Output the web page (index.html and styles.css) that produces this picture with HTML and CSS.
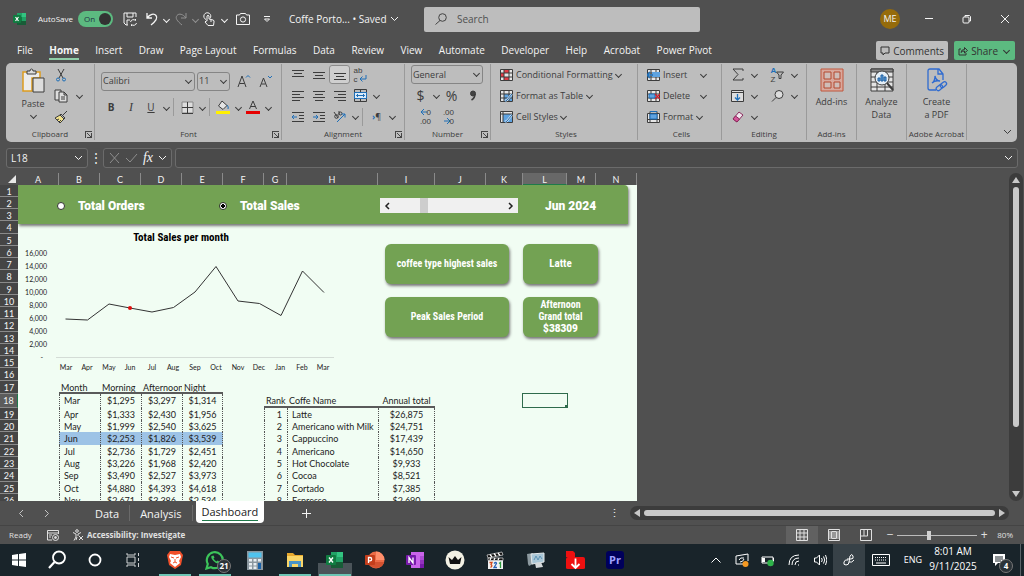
FILE: index.html
```html
<!DOCTYPE html>
<html lang="en">
<head>
	<meta charset="UTF-8">
	<title>Coffe Portofolio - Excel</title>
	<link rel="stylesheet" href="styles.css">
</head>
<body>
	<header class="titlebar">
		<svg class="app" width="14" height="14" viewBox="0 0 14 14"><path fill="#21a366" d="M4 1h9v12H4z"/><path fill="#33c481" d="M9 1h4v4H9z"/><path fill="#107c41" d="M4 5h5v4H4z"/><path fill="#185c37" d="M4 9h9v4H4z"/><rect y="3" width="8" height="8" rx="1" fill="#107c41"/><path d="M2.500 5l3 4M5.500 5l-3 4" stroke="#fff" stroke-width="1.200"/></svg>
		<label class="autosave">AutoSave <input type="checkbox" checked><span class="switch">On</span></label>
		<div class="quick">
			<button aria-label="Save"><svg width="14" height="14" viewBox="0 0 14 14"><path d="M13 5V1H1v10l2 2h2M4 1v4h6V1M4 13V8h3"/><path d="M7.500 10a3 3 0 0 1 5-1.500V7M13.500 11a3 3 0 0 1-5 1.500V14"/></svg></button>
			<button aria-label="Undo"><svg width="14" height="14" viewBox="0 0 14 14"><path d="M2 1v5h5M2 6c3-4 7-5 9-2.500S11 9 6 13" stroke-width="1.300"/></svg></button>
			<button class="dd" aria-label="Undo list"></button>
			<button class="off" aria-label="Redo"><svg width="14" height="14" viewBox="0 0 14 14"><path d="M12 1v5H7M12 6C9 2 5 1 3 3.500S3 9 8 13"/></svg></button>
			<button class="dd off" aria-label="Redo list"></button>
			<button aria-label="Touch mode"><svg width="14" height="14" viewBox="0 0 14 14"><path d="M3 7.500a3.500 3.500 0 1 1 4-1"/><path d="M4 9V4q1-1.500 2 0v3l4 1q1.500.5 1 2l-.5 3.500H5L2 10l1-1zM8 8v2"/></svg></button>
			<button class="dd" aria-label="Touch list"></button>
			<button class="cam" aria-label="Camera"><svg width="14" height="14" viewBox="0 0 14 14"><path d="M.5 3h3l1-1.500h5l1 1.500h3v9.500H.5z"/><circle cx="7" cy="7.500" r="2.600"/></svg></button>
			<button aria-label="Customize"><svg width="8" height="8" viewBox="0 0 8 8"><path d="M1 1.500h6M1.500 4L4 6.500 6.500 4z"/></svg></button>
		</div>
		<button class="doc">Coffe Porto... • Saved <svg width="9" height="6" viewBox="0 0 9 6"><path d="M1 1l3.500 3.500L8 1"/></svg></button>
		<label class="search">
			<svg width="12" height="12" viewBox="0 0 12 12"><circle cx="7.500" cy="4.500" r="3.800"/><path d="M5 7.500L.5 11.500"/></svg>
			<input type="text" placeholder="Search" aria-label="Search">
		</label>
		<span class="avatar">ME</span>
		<div class="win">
			<button aria-label="Minimize"><svg width="10" height="10" viewBox="0 0 10 10"><path d="M1 4.500h8"/></svg></button>
			<button aria-label="Restore"><svg width="10" height="10" viewBox="0 0 10 10"><rect x="1" y="3" width="6" height="6" rx="1"/><path d="M3 3V1.500h4.500L8.500 2.500V7H7"/></svg></button>
			<button aria-label="Close"><svg width="10" height="10" viewBox="0 0 10 10"><path d="M1 1l8 8M9 1L1 9"/></svg></button>
		</div>
	</header>

	<nav class="menu">
		<div class="links"><a href="#">File</a><a href="#" class="on">Home</a><a href="#">Insert</a><a href="#">Draw</a><a href="#">Page Layout</a><a href="#">Formulas</a><a href="#">Data</a><a href="#">Review</a><a href="#">View</a><a href="#">Automate</a><a href="#">Developer</a><a href="#">Help</a><a href="#">Acrobat</a><a href="#">Power Pivot</a></div>
		<button class="comments"><svg width="10" height="10" viewBox="0 0 10 10"><path d="M1 1h8v6H5L3 9V7H1z"/></svg>Comments</button>
		<button class="share"><svg width="10" height="10" viewBox="0 0 10 10"><path d="M3 3H1v6h7V7M3 6.500Q3 3.500 6.500 3.500V1.500L9.500 4.500 6.500 7V5Q4 5 3 6.500z"/></svg>Share<i class="dd"></i></button>
	</nav>

	<section class="ribbon">
		<div class="group clipboard">
			<div class="body">
				<button class="big"><svg width="24" height="26" viewBox="0 0 24 26"><path d="M6 4H2v19h9V10h8V4h-4" fill="#ececec" stroke="#dd9c1e" stroke-width="1.500"/><path d="M6 6V3h3q0-2 1.500-2T12 3h3v3z" fill="#ddd"/><path d="M12 10h11v14H12z" fill="#ddd"/></svg>Paste<i class="dd"></i></button>
				<div class="stack">
					<div class="row"><button class="ib" aria-label="Cut"><svg width="12" height="14" viewBox="0 0 12 14"><path d="M3 1l5 9M9 1L4 10"/><circle cx="3" cy="11.500" r="1.500" stroke="#1e6fb8"/><circle cx="9" cy="11.500" r="1.500" stroke="#1e6fb8"/></svg></button></div>
					<div class="row"><button class="ib" aria-label="Copy"><svg width="14" height="14" viewBox="0 0 14 14"><path d="M5 11H1V1h6v2" fill="#ddd"/><path d="M5 3h5l3 3v7H5zM10 3v3h3M7 8h4M7 10h4" fill="#ddd"/></svg></button><button class="dd" aria-label="Copy options"></button></div>
					<div class="row"><button class="ib" aria-label="Format painter"><svg width="14" height="14" viewBox="0 0 14 14"><path d="M13 1L9 5M7 4l4 4-1 1-4-4z"/><path d="M6 5L1 8l5 5 4-4z" fill="#f0e08a"/><path d="M3 10l2-1M5 12l2-2"/></svg></button></div>
				</div>
			</div>
			<footer>Clipboard<i class="launch"></i></footer>
		</div>
		<div class="group font">
			<div class="body tall">
				<div class="row"><span class="pick name"><select aria-label="Font"><option>Calibri</option></select></span><span class="pick size"><select aria-label="Font size"><option>11</option></select></span><button class="ib grow" aria-label="Increase font"><svg width="14" height="14" viewBox="0 0 14 14"><path d="M1 13L5 2l4 11M2.500 9.500h5"/><path d="M9 3.500l2-2 2 2" stroke="#1e6fb8"/></svg></button><button class="ib" aria-label="Decrease font"><svg width="14" height="14" viewBox="0 0 14 14"><path d="M1 13l3.500-9L8 13M2.500 10h4"/><path d="M9 2l2 2 2-2" stroke="#1e6fb8"/></svg></button></div>
				<div class="row"><button class="ib b">B</button><button class="ib i">I</button><button class="ib u">U</button><button class="dd" aria-label="Underline list"></button><i class="sep"></i><button class="ib" aria-label="Borders"><svg width="13" height="13" viewBox="0 0 13 13"><path d="M1 1h11v11H1z" fill="#ddd" stroke="#888"/><path d="M6.500 1v11M1 6.500h11M1 12.500h11"/></svg></button><button class="dd" aria-label="Border list"></button><i class="sep"></i><button class="ib" aria-label="Fill"><svg width="14" height="14" viewBox="0 0 14 14"><path d="M6 1l5 4.500-4 4L2.500 6z" fill="#e4e4e4"/><path d="M11 5q2 2 1 4" stroke="#1e6fb8"/><path fill="#fff000" stroke="none" d="M0 11h14v3H0z"/></svg></button><button class="dd" aria-label="Fill list"></button><button class="ib" aria-label="Font color"><svg width="14" height="14" viewBox="0 0 14 14"><path d="M3.500 9L7 1l3.500 8M5 6.500h4"/><path fill="#e60000" stroke="none" d="M0 11h14v3H0z"/></svg></button><button class="dd" aria-label="Font color list"></button></div>
			</div>
			<footer>Font<i class="launch"></i></footer>
		</div>
		<div class="group align">
			<div class="body">
				<div class="row"><button class="ib" aria-label="Top align"><svg width="12" height="12" viewBox="0 0 12 12"><path d="M0 1.500h12M2 4.500h8M0 7.500h12"/></svg></button><button class="ib" aria-label="Middle align"><svg width="12" height="12" viewBox="0 0 12 12"><path d="M0 3.500h12M2 6.500h8M0 9.500h12"/></svg></button><button class="ib on" aria-label="Bottom align"><svg width="12" height="12" viewBox="0 0 12 12"><path d="M0 4.500h12M2 7.500h8M0 10.500h12"/></svg></button><button class="ib wrap" aria-label="Wrap text"><span>ab<br>c</span><svg width="8" height="7" viewBox="0 0 8 7"><path d="M7 0v4H1M3.500 1.500L1 4l2.500 2.500" stroke="#1e6fb8"/></svg></button></div>
				<div class="row"><button class="ib" aria-label="Left"><svg width="12" height="12" viewBox="0 0 12 12"><path d="M0 1.500h12M0 4.500h8M0 7.500h12M0 10.500h8"/></svg></button><button class="ib" aria-label="Center"><svg width="12" height="12" viewBox="0 0 12 12"><path d="M0 1.500h12M2 4.500h8M0 7.500h12M2 10.500h8"/></svg></button><button class="ib" aria-label="Right"><svg width="12" height="12" viewBox="0 0 12 12"><path d="M0 1.500h12M4 4.500h8M0 7.500h12M4 10.500h8"/></svg></button><button class="ib" aria-label="Merge"><svg width="13" height="13" viewBox="0 0 13 13"><path d="M.5.500h12v12H.5zM6.500.5v12"/><path d="M.5 3.500h12v6H.5z" fill="#dcecfa" stroke="#1e6fb8"/><path d="M2.500 6.500h8M4 5L2.500 6.500 4 8M9 5l1.500 1.500L9 8" stroke="#1e6fb8"/></svg></button><button class="dd" aria-label="Merge list"></button></div>
				<div class="row"><button class="ib" aria-label="Decrease indent"><svg width="12" height="12" viewBox="0 0 12 12"><path d="M0 1.500h12M7 4.500h5M7 7.500h5M0 10.500h12"/><path d="M0 6h5M2 4L0 6l2 2" stroke="#1e6fb8"/></svg></button><button class="ib" aria-label="Increase indent"><svg width="12" height="12" viewBox="0 0 12 12"><path d="M0 1.500h12M7 4.500h5M7 7.500h5M0 10.500h12"/><path d="M0 6h5M3 4l2 2-2 2" stroke="#1e6fb8"/></svg></button><button class="ib" aria-label="Orientation"><svg width="14" height="14" viewBox="0 0 14 14"><circle cx="3.500" cy="6.500" r="1.800"/><path d="M1 2l4 6M6 1v4"/><circle cx="7.500" cy="3.500" r="1.500"/><path d="M4 12l8-8M8.500 4H12v3.500" stroke="#1e6fb8"/></svg></button><button class="dd" aria-label="Orientation list"></button><i class="sep"></i><button class="ib para"><b>›</b>¶</button><button class="dd" aria-label="Direction list"></button></div>
			</div>
			<footer>Alignment<i class="launch"></i></footer>
		</div>
		<div class="group number">
			<div class="body">
				<div class="row"><span class="pick fmt"><select aria-label="Number format"><option>General</option></select></span></div>
				<div class="row sym"><button class="ib">$</button><button class="dd" aria-label="Currency list"></button><button class="ib">%</button><button class="ib comma" aria-label="Comma style"><svg width="8" height="12" viewBox="0 0 8 12"><circle cx="4" cy="3.500" r="2.500" fill="#444"/><path d="M6 4q0 4-3.500 6" stroke-width="1.500"/></svg></button></div>
				<div class="row"><button class="ib dec"><svg width="6" height="6" viewBox="0 0 6 6"><path d="M0 3h6M3 0L0 3l3 3" stroke="#1e6fb8"/></svg>0<br>.00</button><button class="ib dec">.00<br><svg width="6" height="6" viewBox="0 0 6 6"><path d="M0 3h6M3 0l3 3-3 3" stroke="#1e6fb8"/></svg>0</button></div>
			</div>
			<footer>Number<i class="launch"></i></footer>
		</div>
		<div class="group styles">
			<div class="body">
				<div class="row"><button class="tb"><svg width="13" height="12" viewBox="0 0 13 12"><path d="M.5.500h12v11H.5z" fill="#e6e6e6"/><path d="M4 1h5v3H4zM1 4h3v4H1zM4 8h5v3H4z" fill="#e03c46" stroke="none"/><path d="M.5 4h12M.5 8h12M4 .5v11M9 .5v11"/></svg>Conditional Formatting<i class="dd"></i></button></div>
				<div class="row"><button class="tb"><svg width="13" height="12" viewBox="0 0 13 12"><path d="M.5.500h12v11H.5z" fill="#e6e6e6"/><path d="M4 4h8v7H4z" fill="#5fa3e0" stroke="none"/><path d="M.5 4h12M.5 8h12M4 .5v11M9 .5v11"/><path d="M12 4L7 10l-2 1" stroke="#dcecfa" stroke-width="2"/><path d="M12 4L7 10l-2 1.500" stroke="#1e5f9f"/></svg>Format as Table<i class="dd"></i></button></div>
				<div class="row"><button class="tb"><svg width="13" height="12" viewBox="0 0 13 12"><path d="M.5.500h12v11H.5z" fill="#e6e6e6"/><path d="M3 3h9v8H3z" fill="#5fa3e0" stroke="none"/><path d="M.5 3h12M3 .5v11"/><path d="M12 4L7 10l-2 1" stroke="#dcecfa" stroke-width="2"/><path d="M12 4L7 10l-2 1.500" stroke="#1e5f9f"/></svg>Cell Styles<i class="dd"></i></button></div>
			</div>
			<footer>Styles</footer>
		</div>
		<div class="group cells">
			<div class="body">
				<div class="row"><button class="tb"><svg width="13" height="12" viewBox="0 0 13 12"><path d="M.5.500h12v11H.5zM.5 4h12M.5 8h12M4 .5v11M9 .5v11" fill="#e6e6e6"/><path d="M5 3h8v5H5z" fill="#5fa3e0" stroke="none"/><path d="M0 6h6M3 3L0 6l3 3" stroke="#1e6fb8" stroke-width="1.500"/></svg>Insert</button><button class="dd" aria-label="Insert list"></button></div>
				<div class="row"><button class="tb"><svg width="13" height="12" viewBox="0 0 13 12"><path d="M.5.500h12v11H.5zM.5 4h12M.5 8h12M4 .5v11M9 .5v11" fill="#e6e6e6"/><path d="M2 4h6v4H2z" fill="#5fa3e0" stroke="#1e6fb8"/><path d="M8 4l5 5M13 4L8 9" stroke="#d02030" stroke-width="1.300"/></svg>Delete</button><button class="dd" aria-label="Delete list"></button></div>
				<div class="row"><button class="tb"><svg width="13" height="12" viewBox="0 0 13 12"><path d="M.5 2.500h12v9H.5zM.5 8.500h12M3 .5v11M10 .5v11" fill="#e6e6e6"/><path d="M3 3h7v5H3z" fill="#5fa3e0" stroke="#1e6fb8"/><path d="M3 .5h7" stroke="#1e6fb8"/></svg>Format<i class="dd"></i></button></div>
			</div>
			<footer>Cells</footer>
		</div>
		<div class="group editing">
			<div class="body">
				<div class="row"><button class="ib" aria-label="AutoSum"><svg width="12" height="13" viewBox="0 0 12 13"><path d="M11 3V1H1l5 5.500L1 12h10v-2"/></svg></button><button class="dd" aria-label="Sum list"></button><button class="ib sort" aria-label="Sort and filter"><span><b>A</b><br>Z</span><svg width="8" height="8" viewBox="0 0 8 8"><path d="M.5 1h7L5 4v3.500H3V4z"/></svg></button><button class="dd" aria-label="Sort list"></button></div>
				<div class="row"><button class="ib" aria-label="Fill down"><svg width="13" height="12" viewBox="0 0 13 12"><path d="M.5.500h12v11H.5z" fill="#ddd"/><path d="M.5 2.500h12"/><path d="M6.500 4v6M4 7.500L6.500 10 9 7.500" stroke="#1e6fb8" stroke-width="1.300"/></svg></button><button class="dd" aria-label="Fill list"></button><button class="ib find" aria-label="Find"><svg width="13" height="12" viewBox="0 0 13 12"><circle cx="8" cy="4.500" r="4" fill="#ddd"/><path d="M5 7.500L1 11.500"/></svg></button><button class="dd" aria-label="Find list"></button></div>
				<div class="row"><button class="ib" aria-label="Clear"><svg width="13" height="12" viewBox="0 0 13 12"><path d="M8 1l4 3-6 7-4-3z" fill="#f0e6ee" stroke="#8a2a5c"/><path d="M4.500 5l4 3L6 11 2 8z" fill="#d6569a" stroke="#8a2a5c"/></svg></button><button class="dd" aria-label="Clear list"></button></div>
			</div>
			<footer>Editing</footer>
		</div>
		<div class="group wide">
			<div class="body"><button class="big"><svg width="24" height="24" viewBox="0 0 24 24"><path d="M1 1h22v22H1z" stroke="#c0563c" fill="#d9a89c"/><path d="M4 4h7v7H4zM14 4h6v7h-6zM4 14h7v6H4zM14 14h6v6h-6z" stroke="#b4492f" fill="#cfbdb8"/></svg>Add-ins</button></div>
			<footer>Add-ins</footer>
		</div>
		<div class="group wide">
			<div class="body"><button class="big"><svg width="24" height="24" viewBox="0 0 24 24"><path d="M1 1h22v22H1z" fill="#e4e4e4"/><path d="M1 1h22v3H1z" fill="#888"/><path d="M1 9h22M1 14h22M1 19h22M7 4v19M15 4v19"/><circle cx="12" cy="10" r="7" fill="#e4eef6"/><path d="M17 15l6 7" stroke-width="2"/><path d="M8 13v-3h2v3zM11 13V7h2v6zM14 13V9h2v4z" fill="#5fa3e0" stroke="#1e5f9f"/></svg>Analyze<br>Data</button></div>
			<footer></footer>
		</div>
		<div class="group pdf">
			<div class="body"><button class="big"><svg width="24" height="24" viewBox="0 0 24 24"><g stroke="#2f6bd0" stroke-width="1.300"><path d="M11 22H5q-2 0-2-2V3q0-2 2-2h9l4 5v6M13 1v5h5"/><path d="M7 15q3-2 3-7q1 5 5 5q-5-1-8 2"/><rect x="11" y="18" width="7" height="4" rx="2" transform="rotate(-40 14 20)"/><rect x="15" y="15" width="7" height="4" rx="2" transform="rotate(-40 18 17)"/></g></svg>Create<br>a PDF</button></div>
			<footer>Adobe Acrobat</footer>
		</div>
		<button class="collapse" aria-label="Collapse ribbon"><svg width="9" height="6" viewBox="0 0 9 6"><path d="M1 1l3.500 3.500L8 1"/></svg></button>
	</section>

	<section class="formula">
		<label class="namebox"><input type="text" value="L18" aria-label="Name box"><svg width="9" height="6" viewBox="0 0 9 6"><path d="M1 1l3.500 3.500L8 1"/></svg></label>
		<span class="dots">⋮</span>
		<div class="fx"><button class="off" aria-label="Cancel"><svg width="12" height="12" viewBox="0 0 12 12"><path d="M2 1l9 10M11 1L2 11"/></svg></button><button class="off" aria-label="Enter"><svg width="13" height="12" viewBox="0 0 13 12"><path d="M1 6l4 4 7-8"/></svg></button><button class="fn">fx</button><svg width="9" height="6" viewBox="0 0 9 6"><path d="M1 1l3.500 3.500L8 1"/></svg></div>
		<label class="entry"><input type="text" aria-label="Formula"><svg width="9" height="6" viewBox="0 0 9 6"><path d="M1 1l3.500 3.500L8 1"/></svg></label>
	</section>

	<main class="book">
		<div class="colheads cols">
			<i class="corner"></i><span>A</span><span>B</span><span>C</span><span>D</span><span>E</span><span>F</span><span>G</span><span>H</span><span>I</span><span>J</span><span>K</span><span class="on">L</span><span>M</span><span>N</span>
		</div>
		<div class="rowheads rows">
			<span>1</span><span>2</span><span>3</span><span>4</span><span>5</span><span>6</span><span>7</span><span>8</span><span>9</span><span>10</span><span>11</span><span>12</span><span>13</span><span>14</span><span>15</span><span>16</span><span>17</span><span class="on">18</span><span>19</span><span>20</span><span>21</span><span>22</span><span>23</span><span>24</span><span>25</span><span>26</span>
		</div>
		<div class="sheet cols rows">
			<div class="banner">
				<label><input type="radio" name="metric">Total Orders</label>
				<label><input type="radio" name="metric" checked>Total Sales</label>
				<div class="scroller"><button aria-label="Previous month"><svg width="6" height="8" viewBox="0 0 6 8"><path d="M5 1L2 4l3 3"/></svg></button><input type="range" min="0" max="12" value="3" aria-label="Month"><button aria-label="Next month"><svg width="6" height="8" viewBox="0 0 6 8"><path d="M1 1l3 3-3 3"/></svg></button></div>
				<output>Jun 2024</output>
			</div>

			<figure class="chart">
				<figcaption>Total Sales per month</figcaption>
				<svg width="320" height="130" viewBox="0 0 320 130">
					<g text-anchor="end">
						<text x="29" y="12">16,000</text><text x="29" y="25">14,000</text><text x="29" y="38">12,000</text><text x="29" y="51">10,000</text><text x="29" y="64">8,000</text><text x="29" y="77">6,000</text><text x="29" y="90">4,000</text><text x="29" y="103">2,000</text><text x="25" y="116">-</text>
					</g>
					<g text-anchor="middle">
						<text x="48" y="126">Mar</text><text x="69" y="126">Apr</text><text x="91" y="126">May</text><text x="112" y="126">Jun</text><text x="134" y="126">Jul</text><text x="155" y="126">Aug</text><text x="177" y="126">Sep</text><text x="198" y="126">Oct</text><text x="220" y="126">Nov</text><text x="241" y="126">Dec</text><text x="262" y="126">Jan</text><text x="284" y="126">Feb</text><text x="305" y="126">Mar</text>
					</g>
					<path class="axis" d="M38 113.500h278"/>
					<polyline points="47.500,75 69.500,76 91,60 112,64 134,68 155.500,63.500 177,48 198,22.500 220,57 241.500,59.500 263,71.500 284.500,27 306,48.500"/>
					<circle cx="112" cy="64" r="2" fill="#e01010"/>
				</svg>
			</figure>

			<div class="cards">
				<div class="card">coffee type highest sales</div>
				<div class="card value">Latte</div>
				<div class="card">Peak Sales Period</div>
				<div class="card last"><span>Afternoon</span><span>Grand total</span><strong>$38309</strong></div>
			</div>

			<table class="months">
				<thead><tr><th>Month</th><th>Morning</th><th>Afternoon</th><th>Night</th></tr></thead>
				<tbody>
					<tr><td>Mar</td><td>$1,295</td><td>$3,297</td><td>$1,314</td></tr>
					<tr><td>Apr</td><td>$1,333</td><td>$2,430</td><td>$1,956</td></tr>
					<tr><td>May</td><td>$1,999</td><td>$2,540</td><td>$3,625</td></tr>
					<tr class="current"><td>Jun</td><td>$2,253</td><td>$1,826</td><td>$3,539</td></tr>
					<tr><td>Jul</td><td>$2,736</td><td>$1,729</td><td>$2,451</td></tr>
					<tr><td>Aug</td><td>$3,226</td><td>$1,968</td><td>$2,420</td></tr>
					<tr><td>Sep</td><td>$3,490</td><td>$2,527</td><td>$3,973</td></tr>
					<tr><td>Oct</td><td>$4,880</td><td>$4,393</td><td>$4,618</td></tr>
					<tr><td>Nov</td><td>$2,671</td><td>$3,386</td><td>$2,534</td></tr>
				</tbody>
			</table>

			<table class="ranks">
				<thead><tr><th>Rank</th><th>Coffe Name</th><th>Annual total</th></tr></thead>
				<tbody>
					<tr><td>1</td><td>Latte</td><td>$26,875</td></tr>
					<tr><td>2</td><td>Americano with Milk</td><td>$24,751</td></tr>
					<tr><td>3</td><td>Cappuccino</td><td>$17,439</td></tr>
					<tr><td>4</td><td>Americano</td><td>$14,650</td></tr>
					<tr><td>5</td><td>Hot Chocolate</td><td>$9,933</td></tr>
					<tr><td>6</td><td>Cocoa</td><td>$8,521</td></tr>
					<tr><td>7</td><td>Cortado</td><td>$7,385</td></tr>
					<tr><td>8</td><td>Espresso</td><td>$2,690</td></tr>
				</tbody>
			</table>
			<div class="cursor"></div>
		</div>
		<div class="vbar"><i class="up"></i><i class="thumb"></i><i class="down"></i></div>
	</main>

	<section class="tabs">
		<button class="arrow" aria-label="Previous sheet"><svg width="6" height="9" viewBox="0 0 6 9"><path d="M5 1L1.500 4.500 5 8"/></svg></button>
		<button class="arrow" aria-label="Next sheet"><svg width="6" height="9" viewBox="0 0 6 9"><path d="M1 1l3.500 3.500L1 8"/></svg></button>
		<button class="tab">Data</button><button class="tab">Analysis</button><button class="tab on"><span>Dashboard</span></button>
		<button class="add" aria-label="New sheet"><svg width="9" height="9" viewBox="0 0 9 9"><path d="M4.500 0v9M0 4.500h9"/></svg></button>
		<span class="grip">⋮</span>
		<div class="hbar"><i class="left"></i><i class="thumb"></i><i class="right"></i></div>
	</section>

	<footer class="status">
		<span class="ready">Ready</span>
		<svg width="12" height="11" viewBox="0 0 12 11"><path d="M5 10H.5V.5h11V4M.5 3h11M2 5h3M2 7h2"/><circle cx="8.500" cy="7.500" r="3"/><circle cx="8.500" cy="7.500" r="1" fill="#ddd"/></svg>
		<button class="access"><svg width="12" height="12" viewBox="0 0 12 12"><circle cx="5" cy="2" r="1.300"/><path d="M1 3.500l3 1.500v3l-2 3.500M9 3.500L6 5v2M5 8l-1 3"/><path d="M7 7l4 4M11 7l-4 4"/></svg>Accessibility: Investigate</button>
		<div class="views">
			<button class="on" aria-label="Normal view"><svg width="12" height="12" viewBox="0 0 12 12"><path d="M.5.500h11v11H.5zM.5 4h11M.5 8h11M4 .5v11M8 .5v11"/></svg></button>
			<button aria-label="Page layout view"><svg width="12" height="12" viewBox="0 0 12 12"><path d="M.5.500h11v11H.5zM3.500 2.500h5v7h-5z"/><path d="M4 4h4M4 6h4M4 8h4M2 2v8M10 2v8"/></svg></button>
			<button aria-label="Page break view"><svg width="12" height="12" viewBox="0 0 12 12"><path d="M.5.500h11v11H.5zM4 .5V7M.5 7h7V.5"/></svg></button>
		</div>
		<div class="zoom"><button aria-label="Zoom out">−</button><input type="range" min="0" max="100" value="39" aria-label="Zoom"><button aria-label="Zoom in">+</button><span>80%</span></div>
	</footer>

	<footer class="taskbar">
		<div class="system">
			<button aria-label="Start"><svg width="14" height="14" viewBox="0 0 14 14"><path fill="#fff" stroke="none" d="M0 2l6-1v5.500H0zM7 1l7-1v6.500H7zM0 7.500h6V13l-6-1zM7 7.500h7V14l-7-1z"/></svg></button>
			<button aria-label="Search"><svg width="20" height="20" viewBox="0 0 20 20"><circle cx="12" cy="7.500" r="6" stroke-width="1.800"/><path d="M7.500 12L2 18" stroke-width="2.200"/></svg></button>
			<button aria-label="Assistant"><svg width="14" height="14" viewBox="0 0 14 14"><circle cx="7" cy="7" r="5.500" stroke-width="1.800"/></svg></button>
			<button aria-label="Task view"><svg width="14" height="14" viewBox="0 0 14 14" opacity=".8"><path d="M1 4h8v6H1zM1 0v2h8V0M1 14v-2h8v2M12.500 0v3M12.500 5v3M12.500 10v4"/></svg></button>
		</div>
		<div class="apps">
			<button class="run" aria-label="Browser"><svg width="18" height="20" viewBox="0 0 18 20"><path d="M4 1h10l3 4-2 10-6 4-6-4L1 5z" fill="#f0502a" stroke="none"/><path d="M4 4l5 1 5-1 1 3-2 4 1 2-5 4-5-4 1-2-2-4z" fill="#fff" stroke="none"/><path d="M5 7l3 1M13 7l-3 1M9 9v3M7 13l2-1 2 1" stroke="#f0502a"/></svg></button>
			<button class="run" aria-label="Messages"><svg width="20" height="20" viewBox="0 0 20 20"><path d="M1.500 18.500l1.300-4.500a8 8 0 1 1 3.200 3.200z" stroke="#3cc35a" stroke-width="2.200"/><path d="M6.500 6q-1 2 2 5t5.500 2.500l.5-2-2-1-1 1q-2-1-3-3l1-1-1-2z" fill="#3cc35a" stroke="none"/></svg><b class="count">21</b></button>
			<button aria-label="Calculator"><svg width="16" height="19" viewBox="0 0 16 19"><path d="M0 0h16v19H0z" fill="#8a979f" stroke="none"/><path d="M1.500 1.500h13v5h-13z" fill="#4fc3ee" stroke="none"/><path d="M2 8h3v2.500H2zM6.500 8h3v2.500h-3zM2 12h3v2.500H2zM6.500 12h3v2.500h-3zM2 15.500h3V18H2zM6.500 15.500h3V18h-3zM11 8h3v2.500h-3z" fill="#e8eef2" stroke="none"/><path d="M11 12h3v6h-3z" fill="#1a62a8" stroke="none"/></svg></button>
			<button class="run" aria-label="Files"><svg width="18" height="16" viewBox="0 0 18 16"><path d="M1 1h6l2 2h8v4H1z" fill="#e8a92e" stroke="none"/><path d="M1 4h16v11H1z" fill="#fbd667" stroke="none"/><path d="M3 15V9h12v6h-3v-3H6v3z" fill="#4a94c8" stroke="none"/></svg></button>
			<button class="run active" aria-label="Excel"><svg width="18" height="18" viewBox="0 0 18 18"><path fill="#21a366" stroke="none" d="M5 1h12v16H5z"/><path fill="#33c481" stroke="none" d="M11 1h6v5h-6z"/><path fill="#185c37" stroke="none" d="M5 11h12v6H5z"/><rect y="4" width="10" height="10" rx="1" fill="#107c41" stroke="none"/><path d="M3 6.500l4 5M7 6.500l-4 5" stroke-width="1.400"/></svg></button>
			<button aria-label="PowerPoint"><svg width="20" height="18" viewBox="0 0 20 18"><circle cx="11" cy="9" r="8.500" fill="#ed6c47" stroke="none"/><path d="M11 .5a8.500 8.500 0 0 1 8.500 8.500H11z" fill="#ff8f6b" stroke="none"/><path d="M3 11h16.200A8.500 8.500 0 0 1 3 11z" fill="#d35230" stroke="none"/><rect y="4" width="10" height="10" rx="1" fill="#c43e1c" stroke="none"/><path d="M3.500 12V6.500H5a1.500 1.500 0 0 1 0 3.300H3.500" stroke-width="1.300"/></svg></button>
			<button aria-label="OneNote"><svg width="19" height="18" viewBox="0 0 19 18"><path d="M5 1h13v16H5z" fill="#ca64ea" stroke="none"/><path d="M14 5h4v4h-4z" fill="#ae4bd5" stroke="none"/><path d="M14 9h4v4h-4z" fill="#9332bf" stroke="none"/><path d="M14 13h4v4h-4z" fill="#7719aa" stroke="none"/><rect y="4" width="10" height="10" rx="1" fill="#7719aa" stroke="none"/><path d="M3 12V6.500L7 12V6.500" stroke-width="1.300"/></svg></button>
			<button aria-label="Crown"><svg width="20" height="20" viewBox="0 0 20 20"><circle cx="10" cy="10" r="9.500" fill="#f3f1e4" stroke="none"/><path d="M5 14L3.500 7l3.500 3 3-4 3 4 3.500-3L15 14z" fill="#111" stroke="none"/></svg></button>
			<button aria-label="Media player"><svg width="18" height="19" viewBox="0 0 18 19"><path d="M2 9h15v9H2z" fill="#f2f2f2" stroke="none"/><path d="M1 4l15-3 1 3L2 7zM2 7h15v2.500H2z" fill="#111" stroke="#ddd" stroke-width=".7"/><path d="M4 3.500l2 2.500M8 2.500l2 2.500M12 2l2 2.500M5 7l-1 2M9 7L8 9M13 7l-1 2" stroke-width="1.300"/><path d="M3.500 11.500h2.500l-1 2.200q2 .8-.5 2.800" stroke="#d44a1c" stroke-width="1.300"/><path d="M8 12.500q2-2 2.500 0L8 16.500h3" stroke="#2a62b8" stroke-width="1.300"/><path d="M13 12.500l1.500-1v5.500" stroke="#2c9a3c" stroke-width="1.300"/></svg></button>
			<button aria-label="Monitor"><svg width="19" height="18" viewBox="0 0 19 18"><path d="M1 3l6-1v11l-4 2-1-2z" fill="#8d9aa0" stroke="none"/><path d="M5 3l13-1v9L6 13z" fill="#a9c6d6" stroke="#e4e8ea"/><path d="M8 9l2-4 2 4 2-4 2 3" stroke="#5c92b4"/><path d="M9 12l6-1 2 5-7 1z" fill="#d4d8da" stroke="none"/></svg></button>
			<button aria-label="Downloader"><svg width="20" height="20" viewBox="0 0 20 20"><path d="M1 1h7l2 2v4H1zM1 9q0-2 2-2h15q2 0 2 2v9q0 1-2 1H3q-2 0-2-1z" fill="#ee1010" stroke="none"/><path d="M10.500 8.500v9M6.500 14l4 4 4-4" stroke-width="1.800"/></svg></button>
			<button aria-label="Premiere"><span class="pr">Pr</span></button>
		</div>
		<div class="tray">
			<button aria-label="Hidden icons"><svg width="10" height="6" viewBox="0 0 10 6"><path d="M.5 5.500L5 1l4.500 4.500"/></svg></button>
			<button aria-label="Sync"><svg width="14" height="14" viewBox="0 0 14 14"><path d="M1 3l12-2v7M1 3v8h7"/><path d="M4 7q1-3 5-2M9 6q-1 3-4 3"/><circle cx="10.500" cy="11" r="3" fill="#f59a23" stroke="none"/></svg></button>
			<button aria-label="Battery"><svg width="14" height="14" viewBox="0 0 14 14"><path d="M1 4h11v5M1 4v6h6M12.500 5v3"/><path d="M2.500 5v4" stroke-width="3"/><circle cx="9.500" cy="10" r="3.200" fill="#2fb34a" stroke="none"/></svg></button>
			<button aria-label="Network"><svg width="12" height="12" viewBox="0 0 12 12"><path d="M1 11Q1 1 11 1M4 11Q4 4 11 4M7 11q0-4 4-4M10 11h1"/></svg></button>
			<button aria-label="Volume"><svg width="13" height="12" viewBox="0 0 13 12"><path d="M.5 4h2l3-3v10l-3-3h-2zM7.500 4q1.500 2 0 4M9.500 2.500q2.500 3.500 0 7M11.500 1q3 5 0 10"/></svg></button>
			<button class="ink" aria-label="Ink"><svg width="12" height="12" viewBox="0 0 12 12"><path d="M5 6q-3-1-4 2t2 3 3-3l1-6q2-3 3 0t-2 3H4M6 8q3 1 5-2"/></svg></button>
			<button class="kbd" aria-label="Keyboard"><svg width="18" height="12" viewBox="0 0 18 12"><path d="M.5.500h17v11H.5z"/><path d="M3 3.500h12M3 6h12" stroke-dasharray="1 1"/><path d="M4 9h10"/></svg></button>
			<span class="lang">ENG</span>
			<time>8:01 AM<br>9/11/2025</time>
			<button class="note" aria-label="Notifications"><svg width="14" height="14" viewBox="0 0 14 14"><path d="M1 1h12v9H6l-3 3v-3H1z" fill="#fff" stroke="none"/><path d="M3 4h8M3 6h8M3 8h6" stroke="#1a252b"/></svg><b class="count">4</b></button>
		</div>
	</footer>
</body>
</html>
```
FILE: styles.css
```css
*{
	box-sizing: border-box;
	margin: 0;
	padding: 0;
}
body{
	display: flex;
	flex-direction: column;
	height: 100vh;
	overflow: hidden;
	background: #505050;
	color: #f4f4f4;
	font: 9px/12px "Open Sans", "Noto Sans", sans-serif;
}
button, input, select{
	border: 0;
	background: none;
	color: inherit;
	font: inherit;
	outline: 0;
}
button{
	display: flex;
	align-items: center;
	justify-content: center;
}
a{
	color: inherit;
	text-decoration: none;
}
svg{
	flex: none;
	fill: none;
	stroke: currentColor;
}
.dd{
	display: flex;
	align-items: center;
	justify-content: center;
	flex: none;
	width: 10px;
	height: 10px;
}
/* small drop-down arrow */
.dd::after, .pick::after{
	content: "";
	width: 4px;
	height: 4px;
	border: solid currentColor;
	border-width: 0 1px 1px 0;
	transform: rotate(45deg);
}
.off{
	opacity: .4;
}

/* title bar */
.titlebar{
	display: flex;
	align-items: center;
	flex: none;
	height: 38px;
	padding-left: 13px;
}
.app{
	stroke: none;
}
.autosave{
	display: flex;
	align-items: center;
	gap: 5px;
	margin-left: 11px;
	font-size: 8px;
}
.autosave input{
	position: absolute;
	opacity: 0;
}
.switch{
	display: flex;
	align-items: center;
	justify-content: space-between;
	width: 35px;
	height: 16px;
	padding: 0 2px 0 6px;
	border-radius: 8px;
	background: #5cba80;
	color: #234;
}
.switch::after{
	content: "";
	width: 12px;
	height: 12px;
	border-radius: 50%;
	background: #333;
}
.quick{
	display: flex;
	align-items: center;
	margin-left: 5px;
}
.quick button{
	width: 20px;
	height: 20px;
}
.quick .dd{
	width: 9px;
	height: 10px;
}
.quick button:first-child{
	width: 24px;
}
.quick .cam{
	width: 28px;
}
.doc{
	justify-content: flex-start;
	gap: 3px;
	width: 110px;
	margin-left: 12px;
	font-size: 10px;
	white-space: nowrap;
}
.search{
	display: flex;
	align-items: center;
	gap: 10px;
	width: 276px;
	height: 25px;
	margin-left: 25px;
	padding-left: 11px;
	border-radius: 2px;
	background: #bdbdbd;
	color: #444;
	font-size: 10px;
}
.search input{
	flex: 1;
}
.search input::placeholder{
	color: #505050;
}
.avatar{
	width: 20px;
	height: 20px;
	margin: 0 10px 0 auto;
	border-radius: 50%;
	background: #956b0b;
	line-height: 20px;
	text-align: center;
}
.win{
	display: flex;
}
.win button{
	width: 38px;
	height: 30px;
}

/* ribbon tabs */
.menu{
	display: flex;
	align-items: center;
	flex: none;
	height: 25px;
	padding: 0 9px 0 17px;
	font-size: 10px;
	line-height: 14px;
	white-space: nowrap;
}
.links{
	display: flex;
	justify-content: space-between;
	width: 695px;
}
.menu a{
	padding: 2px 0 1px;
	border-bottom: 2px solid transparent;
}
.menu .on{
	border-color: #8fcfa8;
	font-weight: bold;
}
.menu button{
	gap: 3px;
	height: 19px;
	padding: 0 4px;
	border-radius: 2px;
	background: #bdbdbd;
	color: #333;
}
.menu .comments{
	margin-left: auto;
}
.menu .share{
	margin-left: 6px;
	background: #5cba80;
}

/* ribbon */
.ribbon{
	display: flex;
	flex: none;
	height: 79px;
	margin: 0 7px 0 6px;
	padding: 1px 0 2px;
	border-radius: 5px;
	background: #bdbdbd;
	color: #3c3c3c;
	white-space: nowrap;
}
.group{
	display: flex;
	flex-direction: column;
	flex: none;
	padding: 0 5px;
	border-right: 1px solid #9a9a9a;
}
.group .body{
	flex: 1;
}
.group .row{
	display: flex;
	align-items: center;
	height: 21px;
}
.group .tall{
	padding-top: 4px;
}
.group .tall .row{
	height: 26px;
}
.group footer{
	display: flex;
	justify-content: center;
	height: 12px;
	font-size: 8px;
	position: relative;
}
/* dialog launcher in the corner of a group */
.launch{
	position: absolute;
	right: -3px;
	bottom: 2px;
	width: 7px;
	height: 7px;
	border: solid #444;
	border-width: 1px 0 0 1px;
}
.launch::after{
	content: "";
	position: absolute;
	right: 0;
	bottom: 0;
	width: 4px;
	height: 4px;
	border: solid #444;
	border-width: 0 1px 1px 0;
	background: linear-gradient(45deg, transparent 40%, #444 40% 60%, transparent 60%);
}
.clipboard{ width: 89px; }
.font{ width: 187px; padding-left: 6px; }
.align{ width: 123px; }
.number{ width: 86px; }
.styles{ width: 147px; padding-left: 9px; }
.cells{ width: 84px; padding-left: 9px; }
.editing{ width: 85px; padding-left: 5px; }
.wide{ width: 50px; }
.pdf{ width: 60px; padding: 0; }
.clipboard .body{
	display: flex;
	padding-left: 5px;
}
.stack .dd{
	margin-left: 3px;
}
.big{
	flex-direction: column;
	width: 100%;
	padding-top: 4px;
	line-height: 13px;
}
.big svg{
	margin-bottom: 3px;
}
.clipboard .big{
	justify-content: flex-start;
	width: 34px;
}
.ib{
	flex: none;
	width: 21px;
	height: 19px;
}
.font .ib{
	width: 20px;
}
.font .grow{
	margin: 0 2px;
}
.align .on{
	border: 1px solid #8c8c8c;
	border-radius: 3px;
	background: #cfcfcf;
}
.sep{
	width: 1px;
	height: 18px;
	margin: 0 3px 0 2px;
	background: #9a9a9a;
}
.b, .u{ font-size: 10px; }
.b{ font-weight: bold; }
.i{ font-style: italic; font-family: "Liberation Serif", serif; font-size: 12px; }
.u{ text-decoration: underline; }
.pick{
	display: flex;
	position: relative;
	height: 19px;
	margin-right: 2px;
	border: 1px solid #858585;
	border-radius: 3px;
}
.pick select{
	width: 100%;
	padding-left: 1px;
	appearance: none;
}
.pick::after{
	position: absolute;
	right: 3px;
	top: 5px;
}
.name{ width: 97px; }
.size{ width: 34px; }
.fmt{ width: 73px; margin-left: 1px; }
.wrap span, .sort span{
	font: 8px/9px "Liberation Sans", sans-serif;
	text-align: left;
}
.wrap svg{
	align-self: flex-end;
	margin: 0 0 2px -3px;
}
.sort b{
	color: #1e6fb8;
}
.para b{
	color: #1e6fb8;
}
.sym .ib{
	font-size: 14px;
}
.dec{
	display: block;
	font: 8px/9px "Liberation Sans", sans-serif;
	text-align: right;
}
.dec + .dec{
	margin-left: 2px;
}
.tb{
	gap: 3px;
}
.tb .dd{
	margin-left: -2px;
}
.cells .row{
	justify-content: space-between;
	padding-right: 8px;
}
.editing .row{
	gap: 1px;
}
.editing .sort, .editing .find{
	margin-left: 7px;
}
.collapse{
	align-self: flex-end;
	width: 20px;
	height: 16px;
	margin-left: auto;
}

/* formula bar */
.formula{
	display: flex;
	align-items: center;
	flex: none;
	height: 20px;
	margin: 6px 6px 5px;
	font-size: 10px;
}
.formula label, .fx{
	display: flex;
	align-items: center;
	justify-content: space-between;
	height: 20px;
	padding: 0 4px;
	border: 1px solid #6b6b6b;
	border-radius: 3px;
	background: #4a4a4a;
}
.formula input{
	flex: 1;
	min-width: 0;
}
.namebox{
	width: 82px;
}
.dots{
	width: 15px;
	font-size: 12px;
	text-align: center;
}
.fx{
	width: 69px;
	margin-right: 3px;
}
.fn{
	font: italic 14px "Liberation Serif", serif;
}
.entry{
	flex: 1;
}

/* workbook */
.book{
	display: grid;
	grid-template: 12px 1fr / 18px 1fr 15px;
	flex: 1;
	min-height: 0;
	overflow: hidden;
}
.cols{
	display: grid;
	grid-template-columns: 41px 41px 41px 41px 41px 41px 23px 91px 57px 51px 37px 44px 29px 41px;
}
.rows{
	display: grid;
	grid-template-rows: repeat(4, 12px 12px 12px 13px) 13px 14px repeat(2, 12px 12px 13px) 12px 12px;
}
.colheads{
	grid-column: 1 / 3;
	grid-template-columns: 18px 41px 41px 41px 41px 41px 41px 23px 91px 57px 51px 37px 44px 29px 41px;
}
.colheads span{
	height: 12px;
	border-right: 1px solid #8a8a8a;
	font: 9px/14px Lato, sans-serif;
	text-align: center;
}
.colheads .on{
	border-bottom: 1px solid #1f7a4a;
	background: #686868;
}
.corner{
	align-self: end;
	justify-self: end;
	margin: 0 2px 2px 0;
	border: solid transparent;
	border-width: 0 0 8px 8px;
	border-bottom-color: #e8e8e8;
}
.rowheads{
	overflow: hidden;
	background: #454545;
}
.rowheads span{
	border-bottom: 1px solid #8a8a8a;
	font: 9px/14px Lato, sans-serif;
	text-align: center;
}
.rowheads .on{
	border-right: 1px solid #1f7a4a;
	background: #5c5c5c;
}
.sheet{
	justify-self: start;
	width: 619px;
	overflow: hidden;
	background: #f1fdf3;
	color: #222;
	font: 9px/14px Lato, sans-serif;
}
.banner{
	display: grid;
	grid-template-columns: 162px 161px 138px 1fr;
	align-items: center;
	grid-area: 1 / 1 / 4 / 15;
	height: 39px;
	margin-right: 9px;
	padding: 2px 0 0 39px;
	border-radius: 0 4px 0 0;
	background: #73a253;
	box-shadow: 1px 2px 3px #777;
	color: #fff;
	font: 900 12px/14px Roboto, sans-serif;
}
.banner label{
	display: flex;
	align-items: center;
	gap: 13px;
}
.banner input[type=radio]{
	width: 8px;
	height: 8px;
	border: 1px solid #333;
	border-radius: 50%;
	background: #fff;
	appearance: none;
}
.banner input[type=radio]:checked{
	background: radial-gradient(#000 45%, #fff 50%);
}
.banner output{
	padding-left: 27px;
}
.scroller{
	display: flex;
	height: 15px;
	background: #f0f0f0;
	color: #222;
}
.scroller button{
	width: 14px;
}
.scroller svg{
	stroke-width: 1.5;
}
.scroller input{
	flex: 1;
	min-width: 0;
	appearance: none;
}
.scroller input::-webkit-slider-thumb{
	width: 8px;
	height: 15px;
	background: #cdcdcd;
	appearance: none;
}
.chart{
	grid-area: 4 / 1 / 17 / 9;
	padding-top: 10px;
}
.chart figcaption{
	width: 326px;
	color: #000;
	font: bold 11px/13px "Liberation Sans Narrow", "Roboto Condensed", Roboto, sans-serif;
	text-align: center;
}
.chart svg{
	display: block;
	stroke: none;
}
.chart text{
	fill: #222;
	font-size: 7px;
}
.chart polyline{
	stroke: #333;
}
.chart .axis{
	stroke: #d4dcd6;
}
.cards{
	display: grid;
	grid-template-columns: 124px 75px;
	grid-auto-rows: 40px;
	gap: 13px 14px;
	grid-area: 4 / 9 / 15 / 15;
	padding: 23px 0 0 7px;
}
.card{
	display: flex;
	flex-direction: column;
	align-items: center;
	justify-content: center;
	border-radius: 6px;
	background: #73a253;
	box-shadow: 1px 2px 3px #777;
	color: #fff;
	font: bold 10px/12px "Liberation Sans Narrow", "Roboto Condensed", Roboto, sans-serif;
}
.value{
	font-size: 11px;
}
.last strong{
	font-family: Roboto, sans-serif;
	font-weight: 900;
}

/* the tables sit on the same lines as the sheet */
.sheet table{
	display: grid;
	grid-template: subgrid / subgrid;
}
.sheet thead, .sheet tbody, .sheet tr{
	display: contents;
}
.months{
	grid-area: 17 / 2 / 27 / 6;
}
.ranks{
	grid-area: 18 / 7 / 27 / 10;
}
.sheet th{
	overflow: hidden;
	padding-left: 2px;
	border-bottom: 2px solid #5a5a5a;
	font-weight: normal;
	text-align: left;
	white-space: nowrap;
}
.sheet td{
	border-left: 1px dotted #555;
	text-align: center;
	white-space: nowrap;
}
.sheet td:last-child{
	border-right: 1px dotted #555;
}
.months td:first-child, .ranks td:nth-child(2){
	padding-left: 4px;
	text-align: left;
}
.ranks td:first-child{
	padding-right: 5px;
	text-align: right;
}
.ranks th:last-child{
	padding-left: 0;
	text-align: center;
}
.current td{
	background: #9dc3e6;
}
.cursor{
	grid-area: 18 / 12;
	position: relative;
	margin: -1px -1px 0;
	border: 1px solid #2f6b4c;
}
.cursor::after{
	content: "";
	position: absolute;
	right: -1px;
	bottom: -1px;
	width: 3px;
	height: 3px;
	background: #2f6b4c;
}
.vbar, .hbar{
	display: flex;
	align-items: center;
	border-radius: 7px;
	background: #3c3c3c;
}
.vbar{
	flex-direction: column;
	grid-area: 1 / 3 / 3 / 4;
	margin-right: 1px;
	padding: 4px 0;
}
.vbar .thumb{
	width: 6px;
	height: 75%;
	margin: 4px 0 auto;
}
.thumb{
	border-radius: 3px;
	background: #c8c8c8;
}
.up, .down, .left, .right{
	border: 4px solid transparent;
}
.up{ border-top: 0; border-bottom: 6px solid #c8c8c8; }
.down{ border-bottom: 0; border-top: 6px solid #c8c8c8; }
.left{ border-left: 0; border-right: 6px solid #c8c8c8; }
.right{ border-right: 0; border-left: 6px solid #c8c8c8; }

/* sheet tabs */
.tabs{
	display: flex;
	align-items: center;
	flex: none;
	height: 25px;
	padding: 0 15px 0 8px;
	border-bottom: 1px solid #444;
	font-size: 11px;
}
.arrow{
	width: 26px;
	opacity: .7;
}
.tab{
	height: 16px;
	padding: 2px 10px 0;
	border-right: 1px solid #6a6a6a;
}
.arrow + .tab{
	margin-left: 25px;
}
.tabs .on{
	align-self: flex-start;
	height: 22px;
	margin-left: 3px;
	padding: 0 6px;
	border: 0;
	border-radius: 0 0 4px 4px;
	background: #fff;
	color: #222;
}
.tabs .on span{
	padding: 2px 0;
	border-bottom: 1px solid #1f7a4a;
}
.add{
	width: 20px;
	margin-left: 32px;
}
.grip{
	margin-left: auto;
}
.hbar{
	width: 379px;
	height: 14px;
	margin-left: 10px;
	padding: 0 4px;
}
.hbar .thumb{
	flex: 1;
	height: 6px;
	margin: 0 4px;
}

/* status bar */
.status{
	display: flex;
	align-items: center;
	flex: none;
	height: 18px;
	padding: 0 11px 0 9px;
	color: #e0e0e0;
	font-size: 8px;
}
.ready{
	width: 38px;
}
.access{
	gap: 3px;
	margin-left: 13px;
	font-weight: bold;
}
.views{
	display: flex;
	margin-left: auto;
}
.views button{
	width: 32px;
	height: 18px;
}
.views .on{
	background: #616161;
}
.zoom{
	display: flex;
	align-items: center;
	margin-left: 1px;
}
.zoom button{
	width: 14px;
	font-size: 12px;
}
.zoom input{
	width: 80px;
	height: 12px;
	background: linear-gradient(#bbb, #bbb) center / 100% 1px no-repeat;
	appearance: none;
}
.zoom input::-webkit-slider-thumb{
	width: 4px;
	height: 9px;
	background: #d0d0d0;
	appearance: none;
}
.zoom span{
	margin-left: 6px;
}

/* taskbar */
.taskbar{
	display: flex;
	flex: none;
	height: 32px;
	background: #19242a;
	color: #fff;
}
.system, .apps, .tray{
	display: flex;
	align-items: stretch;
}
.system{
	margin-right: 3px;
}
.system button{
	width: 38px;
}
.apps button{
	position: relative;
	width: 40px;
}
.run::before{
	content: "";
	position: absolute;
	left: 4px;
	right: 4px;
	bottom: 0;
	height: 2px;
	background: #6cc5b4;
}
.active{
	background: linear-gradient(#4b5459, #4b5459) bottom center / 34px 13px no-repeat;
}
.count{
	position: absolute;
	left: 22px;
	top: 15px;
	width: 14px;
	height: 14px;
	border: 1px solid #777;
	border-radius: 50%;
	background: #2b3338;
	font-size: 8px;
	line-height: 12px;
}
.pr{
	width: 18px;
	height: 18px;
	border-radius: 3px;
	background: #00005b;
	color: #a0a0ff;
	font-size: 11px;
	font-weight: bold;
	line-height: 17px;
}
.tray{
	margin-left: auto;
	padding-right: 3px;
}
.tray button{
	position: relative;
	width: 26px;
}
.tray .ink{
	width: 32px;
	background: #374147;
}
.tray .kbd{
	width: 32px;
}
.lang{
	width: 32px;
	line-height: 32px;
	text-align: center;
}
.tray time{
	width: 48px;
	font-size: 10px;
	line-height: 15px;
	text-align: center;
}
.tray .note{
	width: 44px;
	border-right: 1px solid #5a6368;
}
```
